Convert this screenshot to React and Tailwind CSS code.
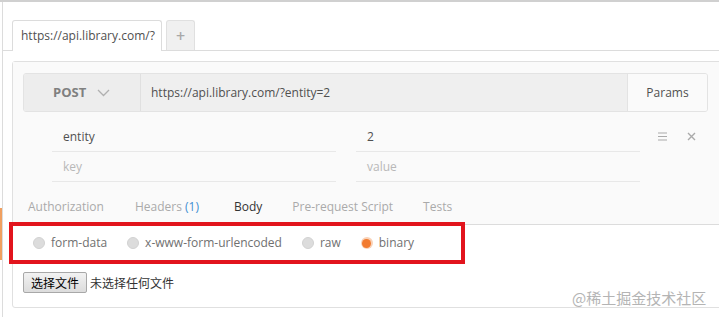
const Radio = ({ label, checked }) => (
  <label className="flex items-center gap-[6px] mr-[20px]">
    {checked ? (
      <span className="w-[12px] h-[12px] rounded-full bg-[#f9d2b8] flex items-center justify-center">
        <span className="w-[9px] h-[9px] rounded-full bg-[#f27b2f]" />
      </span>
    ) : (
      <span className="w-[12px] h-[12px] rounded-full bg-[#dcdcdc] border border-[#d2d2d2]" />
    )}
    <span className="text-[12px] text-[#707070] leading-[18px]">{label}</span>
  </label>
);

const KvRow = ({ k, v, placeholder, icons }) => (
  <div className="flex items-center">
    <div className="ml-[39px] w-[284px] h-[30px] border-b border-[#e8e8e8] flex items-center pl-[11px]">
      <span className={placeholder ? "text-[#b8b8b8]" : "text-[#505050]"}>{k}</span>
    </div>
    <div className="ml-[20px] w-[284px] h-[30px] border-b border-[#e8e8e8] flex items-center pl-[11px]">
      <span className={placeholder ? "text-[#b8b8b8]" : "text-[#505050]"}>{v}</span>
    </div>
    {icons && (
      <div className="flex items-center ml-[18px] gap-[20px] pb-[1px]">
        <svg width="9" height="9" viewBox="0 0 9 9">
          <path d="M0 1h9M0 4.5h9M0 8h9" stroke="#aaa" strokeWidth="1.2" />
        </svg>
        <svg width="9" height="9" viewBox="0 0 9 9">
          <path d="M1 1l7 7M8 1l-7 7" stroke="#aaa" strokeWidth="1.4" />
        </svg>
      </div>
    )}
  </div>
);

export default function App() {
  return (
    <div
      className="w-[719px] h-[317px] overflow-hidden bg-white border-t-2 border-[#d0d0d0] flex text-[12px]"
      style={{ fontFamily: '"Open Sans", "Noto Sans CJK SC", sans-serif' }}
    >
      {/* left strip */}
      <div className="w-[2px] shrink-0">
        <div className="mt-[206px] h-[52px] bg-[#f0a060]" />
      </div>

      <div className="relative flex-1 border-l border-[#dcdcdc] min-w-0">
        {/* tabs */}
        <div className="pt-[18px] pl-[9px] flex items-start border-b border-[#dcdcdc] h-[49px]">
          <div className="w-[150px] h-[31px] bg-white border border-b-0 border-[#dcdcdc] rounded-t-[3px] flex items-center pl-[8px] text-[#505050] text-[12px]">
            https://api.library.com/?
          </div>
          <div className="ml-[4px] w-[29px] h-[30px] bg-[#f0f0f0] border border-b-0 border-[#e0e0e0] rounded-t-[3px] flex items-center justify-center text-[#a8a8a8] text-[16px] font-semibold">
            +
          </div>
        </div>

        {/* panel */}
        <div className="ml-[9px] mt-[10px] w-[720px] h-[247px] border border-[#e0e0e0] rounded-[3px] bg-white">
          <div className="bg-[#fafafa]">
            {/* url bar */}
            <div className="pt-[11px] pl-[10px]">
              <div className="w-[685px] h-[39px] flex border border-[#e3e3e3] rounded-[3px] overflow-hidden">
                <div className="w-[116px] bg-[#ededed] flex items-center pl-[29px] gap-[11px]">
                  <span className="text-[13px] font-bold text-[#808080]">POST</span>
                  <svg width="13" height="8" viewBox="0 0 13 8">
                    <path d="M1 1l5.5 5.5L12 1" fill="none" stroke="#b0b0b0" strokeWidth="1.3" />
                  </svg>
                </div>
                <div className="flex-1 bg-[#efefef] border-l border-[#e0e0e0] flex items-center pl-[10px] text-[#505050]">
                  https://api.library.com/?entity=2
                </div>
                <div className="w-[80px] bg-[#fafafa] border-l border-[#e3e3e3] flex items-center justify-center text-[#505050]">
                  Params
                </div>
              </div>
            </div>

            {/* key value rows */}
            <div className="mt-[10px]">
              <KvRow k="entity" v="2" icons />
              <KvRow k="key" v="value" placeholder />
            </div>

            {/* request tabs */}
            <div className="h-[43px] border-b border-[#dcdcdc] flex items-end pb-[8px] pl-[15px] leading-[18px] text-[#aaaaaa]">
              <span>Authorization</span>
              <span className="ml-[31px]">
                Headers <span className="text-[#3f8fd2]">(1)</span>
              </span>
              <span className="ml-[35px] text-[#333]">Body</span>
              <span className="ml-[30px]">Pre-request Script</span>
              <span className="ml-[30px]">Tests</span>
            </div>
          </div>

          {/* body type */}
          <div className="-mt-[3px] -ml-[4px] w-[456px] h-[42px] border-4 border-[#e2141d] flex items-center pl-[20px]">
            <Radio label="form-data" />
            <Radio label="x-www-form-urlencoded" />
            <Radio label="raw" />
            <Radio label="binary" checked />
          </div>

          {/* file input */}
          <div
            className="mt-[8px] ml-[10px] flex items-center gap-[3px] text-[12px] text-black"
            style={{ fontFamily: '"Noto Sans CJK SC", sans-serif' }}
          >
            <button className="w-[64px] h-[21px] bg-gradient-to-b from-[#f2f2f2] to-[#dcdcdc] border border-[#a8a8a8] rounded-[2px] flex items-center justify-center leading-none">
              选择文件
            </button>
            <span className="text-[#333]">未选择任何文件</span>
          </div>
        </div>

        {/* watermark */}
        <div
          className="absolute left-[569px] top-[286px] text-[15px] text-[#b4b4b4] leading-[20px]"
          style={{ fontFamily: '"Noto Sans CJK SC", sans-serif' }}
        >
          @稀土掘金技术社区
        </div>
      </div>
    </div>
  );
}
